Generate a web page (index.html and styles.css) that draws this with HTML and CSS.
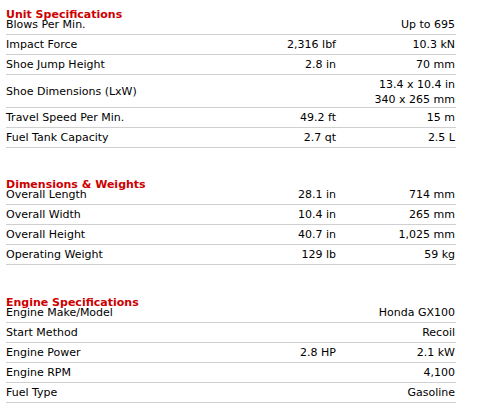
FILE: index.html
```html
<!DOCTYPE html>
<html>
<head>
<meta charset="utf-8">
<link rel="stylesheet" href="styles.css">
</head>
<body>
<div class="specs">
  <section class="group">
    <h3 class="group-title">Unit Specifications</h3>
    <div class="row"><span class="label">Blows Per Min.</span><span class="imp"></span><span class="met">Up to 695</span></div>
    <div class="row"><span class="label">Impact Force</span><span class="imp">2,316 lbf</span><span class="met">10.3 kN</span></div>
    <div class="row"><span class="label">Shoe Jump Height</span><span class="imp">2.8 in</span><span class="met">70 mm</span></div>
    <div class="row row-multi"><span class="label">Shoe Dimensions (LxW)</span><span class="imp"></span><span class="met">13.4 x 10.4 in<br>340 x 265 mm</span></div>
    <div class="row"><span class="label">Travel Speed Per Min.</span><span class="imp">49.2 ft</span><span class="met">15 m</span></div>
    <div class="row"><span class="label">Fuel Tank Capacity</span><span class="imp">2.7 qt</span><span class="met">2.5 L</span></div>
  </section>
  <section class="group">
    <h3 class="group-title">Dimensions &amp; Weights</h3>
    <div class="row"><span class="label">Overall Length</span><span class="imp">28.1 in</span><span class="met">714 mm</span></div>
    <div class="row"><span class="label">Overall Width</span><span class="imp">10.4 in</span><span class="met">265 mm</span></div>
    <div class="row"><span class="label">Overall Height</span><span class="imp">40.7 in</span><span class="met">1,025 mm</span></div>
    <div class="row"><span class="label">Operating Weight</span><span class="imp">129 lb</span><span class="met">59 kg</span></div>
  </section>
  <section class="group group-engine">
    <h3 class="group-title">Engine Specifications</h3>
    <div class="row"><span class="label">Engine Make/Model</span><span class="imp"></span><span class="met">Honda GX100</span></div>
    <div class="row"><span class="label">Start Method</span><span class="imp"></span><span class="met">Recoil</span></div>
    <div class="row"><span class="label">Engine Power</span><span class="imp">2.8 HP</span><span class="met">2.1 kW</span></div>
    <div class="row"><span class="label">Engine RPM</span><span class="imp"></span><span class="met">4,100</span></div>
    <div class="row"><span class="label">Fuel Type</span><span class="imp"></span><span class="met">Gasoline</span></div>
  </section>
</div>
</body>
</html>
```
FILE: styles.css
```css
html, body {
  margin: 0;
  background: #fff;
}
body {
  padding: 8px 0 0 6px;
  font-family: "DejaVu Sans", Verdana, sans-serif;
  font-size: 11px;
  color: #000;
}
.specs {
  width: 450px;
  display: flex;
  flex-direction: column;
  gap: 30px;
}
.group-engine {
  margin-top: 1px;
}
.group-title {
  margin: 0;
  height: 10px;
  font-size: 11px;
  line-height: 14px;
  font-weight: bold;
  color: #cc0000;
  white-space: nowrap;
}
.row {
  display: grid;
  grid-template-columns: 1fr 100px 119px;
  align-items: center;
  line-height: 14px;
  padding: 3px 1px 2px 0;
  border-bottom: 1px solid #d0d0d0;
}
.row-multi {
  padding-top: 2px;
  padding-bottom: 0;
}
.row-multi .met {
  line-height: 15px;
}
.group-title + .row {
  padding-top: 0;
}
.imp, .met {
  text-align: right;
}
```
